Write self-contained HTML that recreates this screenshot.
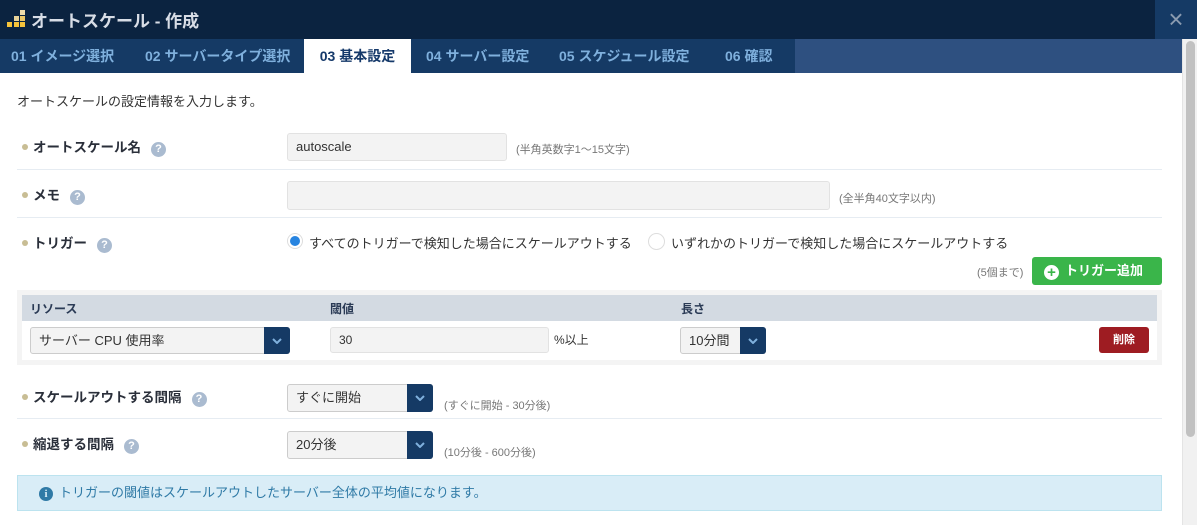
<!DOCTYPE html>
<html><head><meta charset="utf-8"><style>
*{box-sizing:border-box;margin:0;padding:0}
body{width:1197px;height:525px;overflow:hidden;background:#fff;font-family:"Liberation Sans","Noto Sans CJK JP",sans-serif;color:#333;position:relative;font-size:13px}
.a{position:absolute}
.hdr{left:0;top:0;width:1197px;height:39px;background:#0b2340}
.title{left:31px;top:7px;color:#d8dde6;font-size:17px;font-weight:bold}
.close{left:1155px;top:0;width:42px;height:39px;background:#153a65;color:#8a9bb0;font-size:26px;text-align:center;line-height:38px}
.tabs{left:0;top:39px;width:1182px;height:34px;background:#2e5080}
.tabbg{left:0;top:39px;width:795px;height:34px;background:#153a65}
.tab{top:39px;height:34px;line-height:34px;color:#7fb0dd;font-weight:bold;font-size:14px}
.tab.on{background:#fff;color:#15396a;text-align:center}
.sb{left:1182px;top:39px;width:15px;height:486px;background:#f1f1f1;border-left:1px solid #e4e4e4}
.thumb{left:1186px;top:41px;width:9px;height:396px;background:#c1c1c1;border-radius:5px}
.lbl{left:22px;font-weight:bold;font-size:13.5px;color:#2a2f3a}
.lbl:before{content:"";display:inline-block;width:6px;height:6px;border-radius:3px;background:#c8bd94;margin-right:5px;vertical-align:2px}
.q{display:inline-block;width:15px;height:15px;border-radius:8px;background:#aabbd0;color:#fff;font-size:11px;text-align:center;line-height:15px;margin-left:10px;vertical-align:0}
.hr{left:17px;width:1145px;height:1px;background:#e6ecf2}
.inp{background:#f3f3f3;border:1px solid #e2e2e2;border-radius:3px;padding-left:8px;font-size:13px;color:#333}
.note{font-size:11px;color:#777}
.sel{background:#f3f3f3;border:1px solid #ccc;border-radius:3px;font-size:13px;padding-left:8px;color:#333}
.sel i{position:absolute;right:-1px;top:-1px;width:26px;bottom:-1px;background:#153a65;border-radius:0 3px 3px 0;display:flex;align-items:center;justify-content:center}
</style></head><body>
<div class="a hdr"></div>
<svg class="a" style="left:0;top:0" width="30" height="30"><rect x="7" y="22" width="5" height="5" fill="#f5c33b"/><rect x="14" y="22" width="5" height="5" fill="#f5c33b"/><rect x="20" y="22" width="5" height="5" fill="#f5c33b"/><rect x="14" y="16" width="5" height="5" fill="#e8d39a"/><rect x="20" y="16" width="5" height="5" fill="#ecc766"/><rect x="20" y="10" width="5" height="5" fill="#efdcaa"/></svg>
<div class="a title">オートスケール - 作成</div>
<div class="a close">×</div>
<div class="a tabs"></div><div class="a tabbg"></div>
<div class="a tab" style="left:11px">01 イメージ選択</div>
<div class="a tab" style="left:145px">02 サーバータイプ選択</div>
<div class="a tab on" style="left:304px;width:107px">03 基本設定</div>
<div class="a tab" style="left:426px">04 サーバー設定</div>
<div class="a tab" style="left:559px">05 スケジュール設定</div>
<div class="a tab" style="left:725px">06 確認</div>
<div class="a sb"></div><div class="a thumb"></div>

<div class="a" style="left:17px;top:91px;font-size:13px">オートスケールの設定情報を入力します。</div>

<div class="a lbl" style="top:136px">オートスケール名<span class="q">?</span></div>
<div class="a inp" style="left:287px;top:133px;width:220px;height:28px;line-height:26px">autoscale</div>
<div class="a note" style="left:516px;top:141px">(半角英数字1〜15文字)</div>
<div class="a hr" style="top:169px"></div>

<div class="a lbl" style="top:184px">メモ<span class="q">?</span></div>
<div class="a inp" style="left:287px;top:181px;width:543px;height:29px"></div>
<div class="a note" style="left:839px;top:190px">(全半角40文字以内)</div>
<div class="a hr" style="top:217px"></div>

<div class="a lbl" style="top:232px">トリガー<span class="q">?</span></div>
<div class="a" style="left:287px;top:233px;width:16px;height:16px;border-radius:8px;border:1px solid #ddd;background:#fff"><div style="margin:2px;width:10px;height:10px;border-radius:5px;background:#2784e0"></div></div>
<div class="a" style="left:309px;top:233px">すべてのトリガーで検知した場合にスケールアウトする</div>
<div class="a" style="left:648px;top:233px;width:17px;height:17px;border-radius:9px;border:1px solid #ddd"></div>
<div class="a" style="left:671px;top:233px">いずれかのトリガーで検知した場合にスケールアウトする</div>
<div class="a note" style="left:977px;top:264px">(5個まで)</div>
<div class="a" style="left:1032px;top:257px;width:130px;height:28px;background:#3ab54a;border-radius:3px;color:#fff;font-weight:bold;line-height:28px;padding-left:12px"><span style="display:inline-block;width:15px;height:15px;border-radius:8px;background:#fff;color:#3ab54a;text-align:center;line-height:15px;font-size:15px;vertical-align:-2px;margin-right:6px">+</span>トリガー追加</div>

<div class="a" style="left:17px;top:290px;width:1145px;height:75px;background:#f4f4f4"></div>
<div class="a" style="left:22px;top:295px;width:1135px;height:26px;background:#d3dae2"></div>
<div class="a" style="left:22px;top:321px;width:1135px;height:39px;background:#fff"></div>
<div class="a" style="left:30px;top:300px;font-size:12px;font-weight:bold;color:#2a3a55">リソース</div>
<div class="a" style="left:330px;top:300px;font-size:12px;font-weight:bold;color:#2a3a55">閾値</div>
<div class="a" style="left:681px;top:300px;font-size:12px;font-weight:bold;color:#2a3a55">長さ</div>
<div class="a sel" style="left:30px;top:327px;width:260px;height:27px;line-height:25px">サーバー CPU 使用率<i><svg width="10" height="6"><path d="M1 1L5 5L9 1" stroke="#7fb0dd" stroke-width="2" fill="none"/></svg></i></div>
<div class="a inp" style="left:330px;top:327px;width:219px;height:26px;line-height:24px;font-size:12px">30</div>
<div class="a" style="left:554px;top:331px;font-size:12px">%以上</div>
<div class="a sel" style="left:680px;top:327px;width:86px;height:27px;line-height:25px">10分間<i><svg width="10" height="6"><path d="M1 1L5 5L9 1" stroke="#7fb0dd" stroke-width="2" fill="none"/></svg></i></div>
<div class="a" style="left:1099px;top:327px;width:50px;height:26px;background:#9e1c22;border-radius:3px;color:#fff;font-size:11px;font-weight:bold;text-align:center;line-height:26px">削除</div>

<div class="a lbl" style="top:386px">スケールアウトする間隔<span class="q">?</span></div>
<div class="a sel" style="left:287px;top:384px;width:146px;height:28px;line-height:26px">すぐに開始<i><svg width="10" height="6"><path d="M1 1L5 5L9 1" stroke="#7fb0dd" stroke-width="2" fill="none"/></svg></i></div>
<div class="a note" style="left:444px;top:397px">(すぐに開始 - 30分後)</div>
<div class="a hr" style="top:418px"></div>
<div class="a lbl" style="top:433px">縮退する間隔<span class="q">?</span></div>
<div class="a sel" style="left:287px;top:431px;width:146px;height:28px;line-height:26px">20分後<i><svg width="10" height="6"><path d="M1 1L5 5L9 1" stroke="#7fb0dd" stroke-width="2" fill="none"/></svg></i></div>
<div class="a note" style="left:444px;top:444px">(10分後 - 600分後)</div>

<div class="a" style="left:17px;top:475px;width:1145px;height:36px;background:#d9edf7;border:1px solid #bce3ef;color:#2f7aa6;line-height:34px;padding-left:21px"><span style="display:inline-block;width:14px;height:14px;border-radius:7px;background:#2f7aa6;color:#d9edf7;font-size:11px;font-weight:bold;text-align:center;line-height:14px;margin-right:6px;font-family:'Liberation Serif',serif">i</span>トリガーの閾値はスケールアウトしたサーバー全体の平均値になります。</div>
</body></html>
